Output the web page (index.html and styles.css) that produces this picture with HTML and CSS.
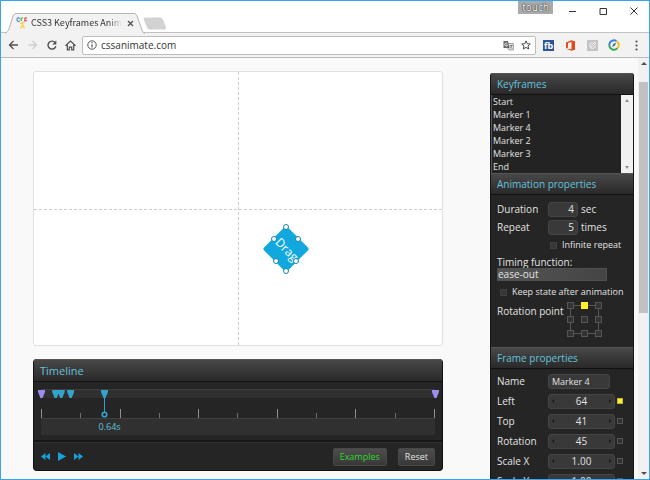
FILE: index.html
```html
<!DOCTYPE html>
<html lang="en">
<head>
<meta charset="utf-8">
<title>CSS3 Keyframes Animation</title>
<link rel="stylesheet" href="styles.css">
</head>
<body>
<header class="titlebar">
  <div class="tab">
    <svg class="tab-shape" width="140" height="21" viewBox="0 0 140 21"><path d="M0 20C2 20 3 18 4 16L8 3Q9 .5 11 .5H129Q131 .5 132 3L137 17Q138 20.500 140 20.500V21H0Z" fill="#f2f2f2"/><path d="M0 20C2 20 3 18 4 16L8 3Q9 .5 11 .5H129Q131 .5 132 3L137 17Q138 20.500 140 20.500" fill="none" stroke="#b4b4b4"/></svg>
    <svg class="favicon" width="12" height="12" viewBox="0 0 12 12" fill="none"><path d="M4 1.500Q1-.2 1 2.500T4 4" stroke="#5a8fcc" stroke-width="1.200"/><path d="M7 1Q4.500 .8 5 2.300T5.500 4" stroke="#62b45c" stroke-width="1.300"/><path d="M11 1Q8.500 .6 8.600 2T10.800 3.800H8" stroke="#df5a70" stroke-width="1.300"/><path d="M4 6.500L6.500 5.500L8.500 6M6.300 5.500L6.700 8L4.500 11.500M6.700 8L8.500 11.500" stroke="#f3d75c" stroke-width="1.600"/></svg>
    <span class="tab-title">CSS3 Keyframes Anima</span>
    <button class="plain" aria-label="Close tab"><svg width="7" height="7" viewBox="0 0 7 7"><path d="M1 1L6 6M6 1L1 6" stroke="#505050" stroke-width="1.300"/></svg></button>
  </div>
  <button class="plain new-tab" aria-label="New tab"><svg width="24" height="13" viewBox="0 0 24 13"><path d="M2 .5H17Q19 .5 20 2.500L23 10.500Q23.500 12.500 21.500 12.500H7Q5 12.500 4 10.500L.8 2.500Q0 .5 2 .5Z" fill="#d2d2d2"/></svg></button>
  <span class="touch">touch</span>
  <button class="plain win" aria-label="Minimize"><svg width="8" height="8" viewBox="0 0 8 8"><path d="M1 4.500H8" stroke="#333"/></svg></button>
  <button class="plain win" aria-label="Maximize"><svg width="8" height="8" viewBox="0 0 8 8"><path d="M1 1.500H7.500V7.500H1Z" fill="none" stroke="#333"/></svg></button>
  <button class="plain win" aria-label="Close"><svg width="8" height="8" viewBox="0 0 8 8"><path d="M.5 .5L7.500 7.500M7.500 .5L.5 7.500" stroke="#333"/></svg></button>
</header>
<nav class="toolbar">
  <button class="plain nav" aria-label="Back"><svg width="11" height="10" viewBox="0 0 11 10"><path d="M5.500 1L1.500 5L5.500 9M1.500 5H10" fill="none" stroke="#505050" stroke-width="1.300"/></svg></button>
  <button class="plain nav" aria-label="Forward"><svg width="11" height="10" viewBox="0 0 11 10"><path d="M5.500 1L9.500 5L5.500 9M1.500 5H9.500" fill="none" stroke="#cfcfcf" stroke-width="1.300"/></svg></button>
  <button class="plain nav" aria-label="Reload"><svg width="10" height="10" viewBox="0 0 10 10"><path d="M8.200 2.600A4 4 0 1 0 8.900 6.200" fill="none" stroke="#505050" stroke-width="1.400"/><path d="M9.300 .5V4.400H5.300Z" fill="#505050"/></svg></button>
  <button class="plain nav" aria-label="Home"><svg width="11" height="11" viewBox="0 0 11 11"><path d="M.5 5.700L5.500 1L10.500 5.700M2.300 5V9.800H4.300V7.200H6.700V9.800H8.700V5" fill="none" stroke="#505050" stroke-width="1.200"/></svg></button>
  <div class="address">
    <svg width="10" height="10" viewBox="0 0 10 10"><circle cx="5" cy="5" r="4.200" fill="none" stroke="#555"/><path d="M5 4.300V7.500M5 2.300V3.300" stroke="#555" stroke-width="1.200"/></svg>
    <input class="url" aria-label="Address" value="cssanimate.com">
    <button class="plain" aria-label="Translate"><svg width="11" height="11" viewBox="0 0 11 11"><path d="M4.500 3.500H10.300V10H6L4.500 8" fill="#eee" stroke="#888" stroke-width=".8"/><path d="M.5 1H5L6.500 8H.5Z" fill="#666"/><path d="M4.300 3.600A1.500 1.500 0 1 0 4.600 5H3.200" stroke="#fff" stroke-width=".8" fill="none"/><path d="M6.500 5.500H9.500M8 4.800V5.500M9 5.500Q8 8 6.700 8.500M7 6.500L9.200 8.800" stroke="#666" stroke-width=".7" fill="none"/></svg></button>
    <button class="plain star" aria-label="Bookmark"><svg width="10" height="10" viewBox="0 0 10 10"><path d="M5 .9L6.200 3.700L9.300 4L7 6L7.700 9L5 7.400L2.300 9L3 6L.7 4L3.800 3.700Z" fill="none" stroke="#484848"/></svg></button>
  </div>
  <button class="plain ext fb" aria-label="Facebook tool">fb</button>
  <button class="plain ext" aria-label="Office"><svg width="11" height="11" viewBox="0 0 11 11"><path d="M1 2.500L6.500 .2L10 1.300V9.700L6.500 10.800L1 8.800L6.500 9.300V2L3 3V7.600L1 8.500Z" fill="#e64a19"/></svg></button>
  <button class="plain ext" aria-label="Edit tool"><svg width="11" height="11" viewBox="0 0 11 11"><path d="M0 0H11V11H0Z" fill="#c4c4c4"/><path d="M8.500 5.500A3 3 0 1 1 5.500 2.500M4 7L4.500 5.300L8 2L9 3L5.700 6.500Z" fill="none" stroke="#f4f4f4" stroke-width=".9"/></svg></button>
  <button class="plain ext" aria-label="Dashboard"><svg width="12" height="12" viewBox="0 0 12 12" fill="none" stroke-width="1.900"><path d="M1.300 6A4.700 4.700 0 0 1 8.500 2" stroke="#3b82e8"/><path d="M8.500 2A4.700 4.700 0 0 1 9.300 9.400" stroke="#f5bd18"/><path d="M9.300 9.400A4.700 4.700 0 0 1 1.300 6" stroke="#35a853"/><path d="M4 8L5.300 5.100L8.300 3.600L6.800 6.700Z" fill="#38749b"/></svg></button>
  <button class="plain ext" aria-label="Menu"><svg width="3" height="11" viewBox="0 0 3 11" fill="#505050"><circle cx="1.500" cy="1.500" r="1.100"/><circle cx="1.500" cy="5.500" r="1.100"/><circle cx="1.500" cy="9.500" r="1.100"/></svg></button>
</nav>
<div class="page">
  <main class="main">
    <section class="stage" aria-label="Stage">
      <svg class="drag" style="left:61.700%;top:64.700%" width="50" height="50" viewBox="0 0 50 50">
        <g transform="rotate(45 25 25)"><rect x="8.500" y="8.500" width="33" height="33" rx="2" fill="#10a8df"/><text x="26" y="29" text-anchor="middle" class="drag-text">Drag</text></g>
        <g fill="#fff" stroke="#1685ab"><circle cx="25" cy="3" r="2.500"/><circle cx="13" cy="15" r="2.500"/><circle cx="37" cy="15" r="2.500"/><circle cx="15" cy="37" r="2.500"/><circle cx="35" cy="37" r="2.500"/><circle cx="25" cy="47" r="2.500"/></g>
      </svg>
    </section>
    <section class="timeline">
      <h2 class="head head-lg">Timeline</h2>
      <div class="time-body">
        <div class="track">
          <i class="marker end" style="left:0%"></i>
          <i class="marker" style="left:3.600%"></i>
          <i class="marker" style="left:5%"></i>
          <i class="marker" style="left:7.400%"></i>
          <i class="marker end" style="left:100%"></i>
          <div class="current" style="left:16%"><svg width="7" height="28" viewBox="0 0 7 28"><path d="M0 0H7V2L4.500 8H2.500L0 2Z" fill="#33a3cc"/><path d="M3.500 7V22" stroke="#33a3cc"/><circle cx="3.500" cy="24.500" r="2.300" fill="#252525" stroke="#33a3cc" stroke-width="1.600"/></svg></div>
        </div>
        <div class="ticks"><i></i><i></i><i></i><i></i><i></i><i></i><i></i><i></i><i></i><i></i><i></i></div>
        <div class="strip"><span class="time" style="left:17.400%">0.64s</span></div>
      </div>
      <div class="controls">
        <button class="plain" aria-label="Rewind"><svg width="9" height="7" viewBox="0 0 9 7"><path d="M4.500 0V7L0 3.500ZM9 0V7L4.500 3.500Z" fill="#17a2db"/></svg></button>
        <button class="plain" aria-label="Play"><svg width="8" height="9" viewBox="0 0 8 9"><path d="M0 0L8 4.500L0 9Z" fill="#17a2db"/></svg></button>
        <button class="plain" aria-label="Forward"><svg width="9" height="7" viewBox="0 0 9 7"><path d="M0 0V7L4.500 3.500ZM4.500 0V7L9 3.500Z" fill="#17a2db"/></svg></button>
        <button class="btn examples">Examples</button>
        <button class="btn">Reset</button>
      </div>
    </section>
  </main>
  <aside class="side">
    <h2 class="head">Keyframes</h2>
    <div class="list">
      <select class="frames" size="6" aria-label="Keyframes"><option>Start</option><option>Marker 1</option><option>Marker 4</option><option>Marker 2</option><option>Marker 3</option><option>End</option></select>
      <div class="list-bar"><i class="up"></i><i class="down"></i></div>
    </div>
    <h2 class="head">Animation properties</h2>
    <div class="props anim">
      <div class="row"><label for="dur">Duration</label><input id="dur" class="num" value="4"><span>sec</span></div>
      <div class="row"><label for="rep">Repeat</label><input id="rep" class="num" value="5"><span>times</span></div>
      <label class="check indent"><input type="checkbox">Infinite repeat</label>
      <label class="timing" for="fn">Timing function:</label>
      <select id="fn" class="fn"><option>ease-out</option></select>
      <label class="check"><input type="checkbox">Keep state after animation</label>
      <div class="rotation"><span>Rotation point</span>
        <div class="points"><button aria-label="Top left"></button><button class="on" aria-label="Top"></button><button aria-label="Top right"></button><button aria-label="Left"></button><button aria-label="Center"></button><button aria-label="Right"></button><button aria-label="Bottom left"></button><button aria-label="Bottom"></button><button aria-label="Bottom right"></button></div>
      </div>
    </div>
    <h2 class="head">Frame properties</h2>
    <div class="props frame">
      <div class="row"><label for="nm">Name</label><input id="nm" class="name" value="Marker 4"></div>
      <div class="row"><label for="l">Left</label><div class="spin"><input id="l" value="64"></div><input type="checkbox" aria-label="Left set" checked></div>
      <div class="row"><label for="t">Top</label><div class="spin"><input id="t" value="41"></div><input type="checkbox" aria-label="Top set"></div>
      <div class="row"><label for="r">Rotation</label><div class="spin"><input id="r" value="45"></div><input type="checkbox" aria-label="Rotation set"></div>
      <div class="row"><label for="sx">Scale X</label><div class="spin"><input id="sx" value="1.00"></div><input type="checkbox" aria-label="Scale X set"></div>
      <div class="row"><label for="sy">Scale Y</label><div class="spin"><input id="sy" value="1.00"></div><input type="checkbox" aria-label="Scale Y set"></div>
    </div>
  </aside>
  <div class="scrollbar"><i class="up"></i><div class="thumb"></div><i class="down"></i></div>
</div>
</body>
</html>
```
FILE: styles.css
```css
* { box-sizing: border-box; }
body { margin: 0; height: 100vh; overflow: hidden; display: flex; flex-direction: column; border: 1px solid #38a3ee; background: #f9f9f9; font: 10px/14px "Open Sans", sans-serif; color: #e2e2e2; }
button, input, select { font: inherit; color: inherit; margin: 0; }
.plain { display: flex; align-items: center; justify-content: center; padding: 0; border: 0; background: none; }
svg { display: block; flex: none; }

.titlebar { flex: none; display: flex; height: 32px; background: #fff; border-bottom: 1px solid #c2c2c2; }
.tab { position: relative; z-index: 1; display: flex; align-items: center; width: 140px; height: 20px; margin: 12px 0 0 4px; padding: 0 11px; color: #333; }
.tab-shape { position: absolute; left: 0; top: 0; }
.favicon, .tab-title, .tab .plain { position: relative; }
.tab-title { width: 91px; margin: 0 5px 0 3px; overflow: hidden; white-space: nowrap; font: 9px/14px "Noto Sans CJK SC", sans-serif; mask-image: linear-gradient(90deg, #000 85%, transparent); }
.new-tab { height: 13px; margin: 16px 0 0 -2px; }
.touch { width: 35px; height: 13px; margin: 0 3px 0 auto; background: #aaa; color: #fff; text-align: center; line-height: 13px; text-shadow: 0 0 1px #333, 0 0 1px #333, 0 0 1px #333; }
.win { width: 31px; height: 20px; }

.toolbar { flex: none; display: flex; align-items: center; height: 25px; padding: 0 2px 0 3px; background: #f2f2f2; border-bottom: 1px solid #bcbcbc; }
.nav { width: 19px; }
.address { flex: 1; display: flex; align-items: center; height: 19px; margin: 0 1px 0 2px; padding: 0 4px; border: 1px solid #bebebe; border-radius: 2px; background: #fff; }
.url { flex: 1; min-width: 0; padding: 0 4px; border: 0; background: none; color: #333; font-size: 10px; }
.star { margin-left: 7px; }
.ext { width: 22px; }
.fb { width: 11px; height: 11px; margin: 0 5px 0 6px; background: #2e5498; color: #fff; font: bold 9px/11px "Open Sans", sans-serif; }

.page { flex: 1; min-height: 0; display: flex; }
.main { flex: 1; padding: 13px 0 8px 32px; display: flex; flex-direction: column; }
.stage { position: relative; flex: 1; margin-bottom: 13px; border: 1px solid #e0e0e0; border-radius: 3px; background: #fff; }
.stage::before, .stage::after { content: ""; position: absolute; }
.stage::before { left: 50%; top: 0; bottom: 0; border-left: 1px dashed #d0d0d0; }
.stage::after { top: 50%; left: 0; right: 0; border-top: 1px dashed #d0d0d0; }
.drag { position: absolute; z-index: 1; transform: translate(-50%, -50%); }
.drag-text { font: 500 12px "Open Sans", sans-serif; fill: #fff; }

.head { margin: 0; height: 22px; padding: 0 7px; border-top: 1px solid #555; border-bottom: 1px solid #111; background: linear-gradient(#484848, #292929); color: #63c3de; font: 500 10px/20px "Open Sans", sans-serif; }
.head-lg { height: 23px; font-size: 11px; line-height: 22px; border-radius: 3px 3px 0 0; }
.timeline { border: 1px solid #111; border-top: 0; border-radius: 4px; background: #252525; }
.timeline .head { padding: 0 6px; }
.time-body { padding: 7px 7px 5px; border-bottom: 2px solid #161616; }
.track { position: relative; height: 9px; background: #303030; border-top: 1px solid #3d3d3d; }
.marker { position: absolute; top: 0; width: 7px; height: 8px; margin-left: -3px; background: #33a3cc; clip-path: polygon(0 0, 100% 0, 100% 25%, 65% 100%, 35% 100%, 0 25%); }
.marker.end { background: #9a8cf0; }
.current { position: absolute; z-index: 1; top: 0; margin-left: -3px; }
.ticks { display: flex; justify-content: space-between; align-items: flex-end; height: 20px; }
.ticks i { width: 1px; height: 5px; background: #707070; }
.ticks i:nth-child(odd) { height: 9px; background: #909090; }
.strip { position: relative; height: 17px; background: #303030; border-top: 1px solid #404040; }
.time { position: absolute; top: 1px; transform: translateX(-50%); color: #63c3de; font-size: 9px; }
.controls { display: flex; align-items: center; gap: 8px; height: 28px; padding: 0 7px; border-top: 1px solid #303030; }
.btn { height: 18px; padding: 0 6px; border: 1px solid #484848; border-radius: 2px; background: linear-gradient(#4d4d4d, #383838); font-size: 9px; line-height: 14px; }
.examples { margin: 0 3px 0 auto; color: #2fd82f; }

.side { width: 144px; margin: 15px 4px 0 47px; border: solid #151515; border-width: 0 1px; border-radius: 3px 3px 0 0; background: #252525; overflow: hidden; }
.side .head { padding: 0 6px; }
.list { display: flex; height: 78px; border-left: 1px solid #555; background: #232323; }
.frames { flex: 1; height: 78px; padding: 0; border: 0; outline: 0; background: none; overflow: hidden; font-size: 9px; font-weight: 500; }
.frames option { height: 13px; min-height: 13px; padding: 0 0 0 1px; line-height: 12px; }
.list-bar { display: flex; flex-direction: column; justify-content: space-between; align-items: center; width: 12px; padding: 4px 0; background: #f1f1f1; }
.up, .down { width: 0; height: 0; border: solid transparent; border-width: 0 2px 3px; border-bottom-color: #909090; }
.down { border-width: 3px 2px 0; border-top-color: #909090; }
.props { display: flex; flex-direction: column; padding: 0 6px; white-space: nowrap; }
.anim { height: 152px; padding-top: 5px; }
.row { flex: none; display: flex; align-items: center; height: 18px; }
.row label { width: 51px; }
.num, .name, .spin { width: 30px; height: 15px; padding: 0 3px; border: 1px solid #454545; border-radius: 3px; background: #393939; line-height: 13px; }
.num { margin-right: 3px; text-align: right; }
.name { width: 62px; font-size: 9px; }
.check { display: flex; align-items: center; gap: 5px; height: 18px; padding-left: 3px; font-size: 9px; }
.indent { padding-left: 53px; }
input[type=checkbox] { appearance: none; width: 7px; height: 7px; border: 1px solid #404040; background: #373737; }
.timing { height: 14px; line-height: 16px; }
.fn { appearance: none; width: 110px; height: 13px; margin-bottom: 2px; padding: 0; border: 1px solid #505050; border-radius: 0; background: linear-gradient(90deg, #555, #444); line-height: 11px; }
.rotation { display: flex; justify-content: space-between; padding: 1px 25px 0 0; }
.rotation span { margin-top: 2px; }
.points { display: grid; grid-template-columns: repeat(3, 7px); justify-content: space-between; align-content: space-between; width: 35px; height: 35px; background: linear-gradient(#252525, #252525) 50% 50% / 27px 27px no-repeat, linear-gradient(#585858, #585858) 50% 50% / 29px 29px no-repeat; }
.points button { width: 7px; height: 7px; padding: 0; border: 1px solid #555; background: #333; }
.points .on { background: #fff22d; border-color: #fff22d; }
.frame { padding-top: 2px; }
.frame .row { height: 20px; }
.spin { display: flex; align-items: center; justify-content: space-between; width: 67px; }
.spin input { width: 40px; padding: 0; border: 0; background: none; text-align: center; line-height: 13px; height: 13px; }
.spin::before, .spin::after { content: ""; border: 2px solid transparent; border-right-color: #191919; border-left-width: 0; }
.spin::after { border-right-width: 0; border-left: 2px solid #191919; }
.row input[type=checkbox] { width: 6px; height: 6px; margin-left: 2px; border-color: #555; background: #303030; }
.row input[type=checkbox]:checked { background: #fff22d; border-color: #bfb62d; }

.scrollbar { display: flex; flex-direction: column; align-items: center; width: 11px; padding: 4px 1px; background: #f1f1f1; }
.scrollbar .up { border-width: 0 3px 3px; border-bottom-color: #505050; }
.scrollbar .down { margin-top: auto; border-width: 3px 3px 0; border-top-color: #505050; }
.thumb { width: 100%; height: 56%; margin-top: 17px; background: #c1c1c1; }
```
